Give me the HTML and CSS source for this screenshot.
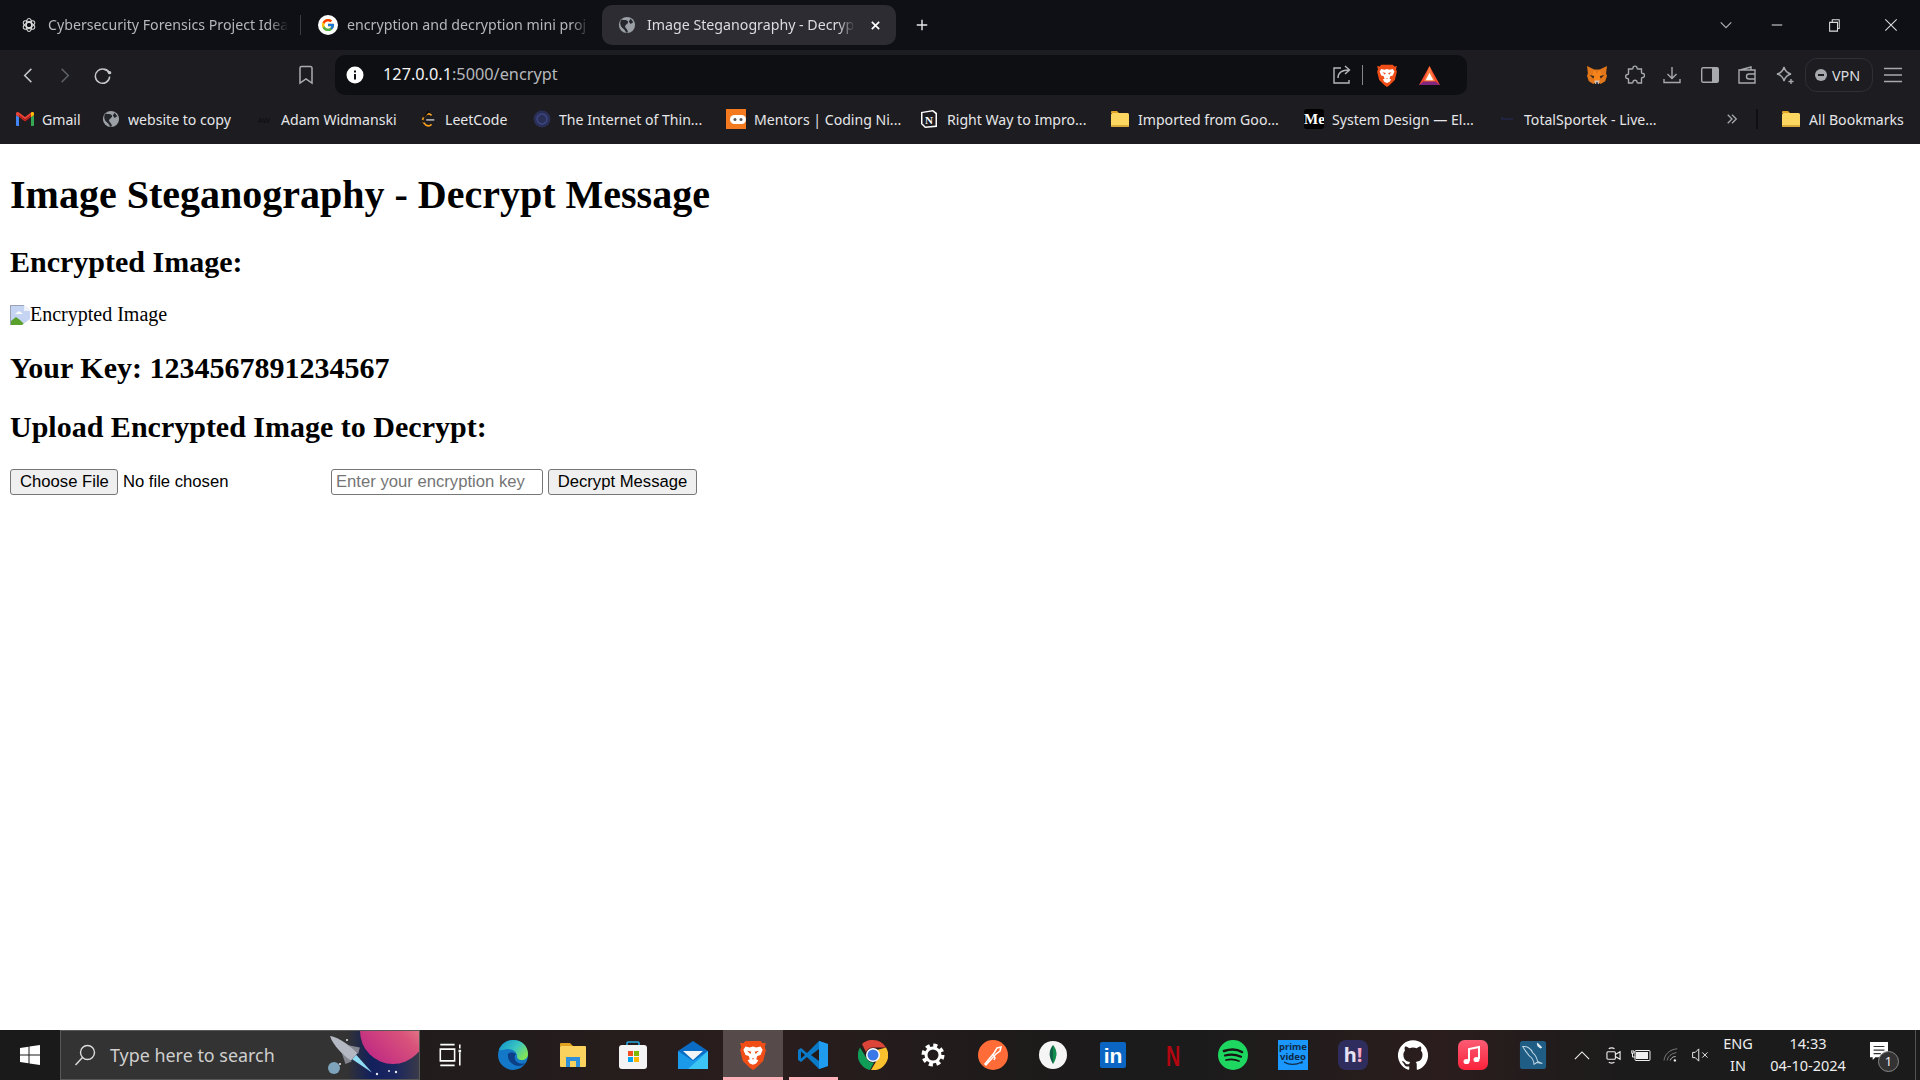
FILE: index.html
```html
<!doctype html>
<html lang="en">
  <head>
    <meta charset="UTF-8" />
    <meta name="viewport" content="width=device-width, initial-scale=1.0" />
    <link rel="stylesheet" href="styles.css">
    <title>Image Steganography - Decrypt Message</title>
  </head>
  <body>
    <svg class="sprite" aria-hidden="true">
      <symbol id="globe" viewBox="0 0 20 20">
        <circle cx="10" cy="10" r="9" fill="#9aa0a6"/>
        <path d="M4 4c3 1 6 0 7 2s-2 3-3 5 3 3 3 7l-2 .5c-1-4-5-5-6-8-1-2-.5-5 1-6.500zM14 3l3 4-3 2-2-3z" fill="#26272c"/>
      </symbol>
      <symbol id="folder" viewBox="0 0 20 20">
        <path d="M1 3a1 1 0 0 1 1-1h5l2 2h-8z" fill="#e0a526"/>
        <rect x="1" y="4" width="18" height="14" rx="1.5" fill="#fbd661"/>
        <rect x="1" y="16" width="18" height="2" rx="1" fill="#d9a93c"/>
      </symbol>
      <symbol id="brave" viewBox="0 0 24 28">
        <path d="M5 1h14l2 2 3-.5-1 4 1 3-2.500 10L15 26l-3 2-3-2-6.500-6.500L0 9.500l1-3-1-4 3 .5z" fill="#f04e16"/>
        <path d="M5 6l4 1 3-1 3 1 4-1 2 3-2 5-3 1-1 3 2 1-2 3-3 1-3-1-2-3 2-1-1-3-3-1-2-5z" fill="#fff"/>
        <path d="M6.500 10l4 1-1 2zM17.500 10l-4 1 1 2zM11 17h2l-1 1.500z" fill="#f04e16"/>
      </symbol>
    </svg>

    <div class="browser">
      <div class="tabstrip">
        <div class="tab">
          <svg class="ico16" viewBox="0 0 20 20" fill="none" stroke="#ddd" stroke-width="1.3"><circle cx="10" cy="10" r="3.500"/><ellipse cx="10" cy="10" rx="8" ry="3.500" transform="rotate(30 10 10)"/><ellipse cx="10" cy="10" rx="8" ry="3.500" transform="rotate(90 10 10)"/><ellipse cx="10" cy="10" rx="8" ry="3.500" transform="rotate(150 10 10)"/></svg>
          <span class="tab-title">Cybersecurity Forensics Project Idea</span>
        </div>
        <div class="tab-sep"></div>
        <div class="tab">
          <svg class="ico20" viewBox="0 0 48 48"><circle cx="24" cy="24" r="24" fill="#fff"/><g transform="translate(6.500 6.500) scale(.73)"><path fill="#FFC107" d="M43.600 20.500H42V20H24v8h11.300C33.700 32.700 29.200 36 24 36c-6.600 0-12-5.400-12-12s5.400-12 12-12c3.100 0 5.800 1.200 7.900 3l5.700-5.700C34 6.100 29.300 4 24 4 13 4 4 13 4 24s9 20 20 20 20-9 20-20c0-1.200-.1-2.300-.4-3.500z"/><path fill="#FF3D00" d="M6.300 14.700l6.600 4.800C14.700 15.100 19 12 24 12c3.100 0 5.800 1.200 7.900 3l5.700-5.700C34 6.100 29.300 4 24 4 16.300 4 9.700 8.300 6.300 14.700z"/><path fill="#4CAF50" d="M24 44c5.200 0 9.900-2 13.400-5.200l-6.200-5.200C29.200 35.100 26.700 36 24 36c-5.200 0-9.600-3.300-11.300-7.900l-6.500 5C9.500 39.600 16.200 44 24 44z"/><path fill="#1976D2" d="M43.600 20.500H42V20H24v8h11.300c-.8 2.200-2.200 4.200-4.100 5.600l6.200 5.200C37 39.200 44 34 44 24c0-1.200-.1-2.300-.4-3.500z"/></g></svg>
          <span class="tab-title">encryption and decryption mini proj</span>
        </div>
        <div class="tab active">
          <svg class="ico18"><use href="#globe"/></svg>
          <span class="tab-title">Image Steganography - Decryp</span>
          <svg class="tab-close" viewBox="0 0 12 12" stroke="#fff" stroke-width="1.800"><path d="M2 2l8 8M10 2l-8 8"/></svg>
        </div>
        <svg class="new-tab" viewBox="0 0 16 16" stroke="#e8e8e8" stroke-width="1.600"><path d="M8 2v12M2 8h12"/></svg>
        <div class="win-controls">
          <svg viewBox="0 0 16 16" fill="none" stroke="#a9abb0" stroke-width="1.500"><path d="M2 5l6 6 6-6"/></svg>
          <svg viewBox="0 0 16 16" fill="none" stroke="#ddd" stroke-width="1.200"><path d="M2 8h12"/></svg>
          <svg viewBox="0 0 16 16" fill="none" stroke="#ddd" stroke-width="1.200"><path d="M3 5h9v10H3zM6 5V2h8v10h-2"/></svg>
          <svg viewBox="0 0 16 16" fill="none" stroke="#ddd" stroke-width="1.200"><path d="M1.500 1.500l13 13M14.500 1.500l-13 13"/></svg>
        </div>
      </div>

      <div class="toolbar">
        <svg class="nav-btn" viewBox="0 0 20 20" fill="none" stroke="#c4c6ca" stroke-width="1.600"><path d="M13 3l-7 7 7 7"/></svg>
        <svg class="nav-btn dim" viewBox="0 0 20 20" fill="none" stroke="#5d5e63" stroke-width="1.600"><path d="M7 3l7 7-7 7"/></svg>
        <svg class="nav-btn" viewBox="0 0 20 20" fill="none" stroke="#c4c6ca" stroke-width="1.600"><path d="M17 8a7.500 7.500 0 1 0 .5 3"/><path d="M12 3.500c2 0 4 1.500 5 3.500" /><circle cx="17.500" cy="7" r="1" fill="#c4c6ca"/></svg>
        <svg class="bookmark-btn" viewBox="0 0 16 20" fill="none" stroke="#aaacb0" stroke-width="1.500"><path d="M2 3a1.500 1.500 0 0 1 1.500-1.500h9A1.500 1.500 0 0 1 14 3v15l-6-4-6 4z"/></svg>
        <div class="omnibox">
          <svg class="ico18" viewBox="0 0 18 18"><circle cx="9" cy="9" r="8.500" fill="#fff"/><rect x="8" y="8" width="2" height="5.500" fill="#0e0f13"/><rect x="8" y="4.500" width="2" height="2" fill="#0e0f13"/></svg>
          <span class="url"><span class="url-host">127.0.0.1</span>:5000/encrypt</span>
          <svg class="omni-share" viewBox="0 0 20 20" fill="none" stroke="#b4b6ba" stroke-width="1.400"><path d="M9 3H2v15h15v-3M6 13c0-5 4-8 11-8M13 1l4.500 4-4.500 4"/></svg>
          <div class="omni-sep"></div>
          <svg class="omni-brave"><use href="#brave"/></svg>
          <svg class="omni-bat" viewBox="0 0 24 22"><path d="M12 1l11 20H1z" fill="#f5472d"/><path d="M1 21l5-4h12l5 4z" fill="#80267f"/><path d="M12 1l6 16H6z" fill="#ff7a3c"/><path d="M12 8l4 8H8z" fill="#fff"/></svg>
        </div>
        <div class="tool-icons">
          <svg viewBox="0 0 22 22"><path d="M0 1l8 4h6l8-4-1 8 1 3-2 6-5 3-1-1h-6l-1 1-5-3-2-6 1-3z" fill="#e2761b"/><path d="M8 5l3 5 3-5 3 8-6 6-6-6z" fill="#f6851b"/><path d="M3 11l5 1-1 3zM19 11l-5 1 1 3z" fill="#3a2a1c"/><path d="M8 17h6l-1 4H9z" fill="#d7c1b3"/><path d="M10 19h2v2h-2z" fill="#233447"/></svg>
          <svg viewBox="0 0 20 20" fill="none" stroke="#a7a9ad" stroke-width="1.400"><path d="M8 3c0-2.500 4-2.500 4 0 0 1 .5 1 1 1h3.500v3.500c0 .5.5 1 1.200 1 2.400 0 2.400 4 0 4-.7 0-1.200.5-1.200 1V18H13c-.5 0-1-.4-1-1 0-2.400-4-2.400-4 0 0 .6-.5 1-1 1H3.500v-3.500c0-.5-.5-1-1-1-2.400 0-2.400-4 0-4 .5 0 1-.5 1-1V4H7c.5 0 1 0 1-1z"/></svg>
          <svg viewBox="0 0 20 20" fill="none" stroke="#a7a9ad" stroke-width="1.400"><path d="M10 2v11M5.500 9l4.500 4.500L14.500 9M2 14v3.500h16V14"/></svg>
          <svg viewBox="0 0 20 20"><rect x="1.700" y="2.700" width="16.600" height="14.600" rx="1.500" fill="none" stroke="#a7a9ad" stroke-width="1.400"/><rect x="12" y="3" width="6" height="14" fill="#a7a9ad"/></svg>
          <svg viewBox="0 0 20 20" fill="none" stroke="#a7a9ad" stroke-width="1.400"><path d="M3 5l11-3v3M2 5h16v13H2zM18 9h-6a2 2 0 0 0 0 5h6"/></svg>
          <svg viewBox="0 0 20 20" fill="none" stroke="#a7a9ad" stroke-width="1.400"><path d="M9 2c1 4 3 6 7 7-4 1-6 3-7 7-1-4-3-6-7-7 4-1 6-3 7-7zM16 14v5M13.500 16.500h5"/></svg>
          <div class="vpn">
            <svg viewBox="0 0 12 12"><circle cx="6" cy="6" r="6" fill="#a7a9ad"/><rect x="3" y="5" width="6" height="2" fill="#1c1c21"/></svg>
            <span>VPN</span>
          </div>
          <svg viewBox="0 0 20 20" stroke="#a7a9ad" stroke-width="1.400"><path d="M1 3.500h18M1 10h18M1 16.500h18"/></svg>
        </div>
      </div>

      <div class="bookmarks">
        <div class="bm">
          <svg class="ico18" viewBox="0 0 18 14"><path d="M0 3l3 2v9H1a1 1 0 0 1-1-1z" fill="#4285f4"/><path d="M15 5l3-2v10a1 1 0 0 1-1 1h-2z" fill="#34a853"/><path d="M0 1.500C0 0 1.700-.5 3 .5L9 5l6-4.500c1.300-1 3-.5 3 1V3l-3 2v-2L9 7.500 3 3v2L0 3z" fill="#ea4335"/><path d="M15 .5c1.300-1 3-.5 3 1V3l-3 2z" fill="#fbbc04"/><path d="M3 3l6 4.500L15 3v2L9 9.500 3 5z" fill="#c5221f"/></svg>
          <span>Gmail</span>
        </div>
        <div class="bm"><svg class="ico18"><use href="#globe"/></svg><span>website to copy</span></div>
        <div class="bm">
          <svg class="ico18" viewBox="0 0 18 18"><text x="9" y="13" class="aw-logo">AW</text></svg>
          <span>Adam Widmanski</span>
        </div>
        <div class="bm">
          <svg class="ico18" viewBox="0 0 18 20" fill="none" stroke-width="1.800"><path d="M4 8l-1 3 1 3 3 3c2 1 4 1 6-1" stroke="#f89f1b"/><path d="M4 8l3-3c2-1 4-1 6 1" stroke="#f89f1b"/><path d="M7 11h9" stroke="#b3b3b3"/><path d="M10 1L4 8M3 11l1 3" stroke="#0c0c0c"/></svg>
          <span>LeetCode</span>
        </div>
        <div class="bm">
          <svg class="ico18" viewBox="0 0 18 18"><circle cx="9" cy="9" r="8.500" fill="#2a2f55"/><circle cx="9" cy="9" r="5" fill="none" stroke="#3d4788" stroke-width="1.500"/></svg>
          <span>The Internet of Thin...</span>
        </div>
        <div class="bm">
          <svg class="ico20" viewBox="0 0 20 20"><rect width="20" height="20" fill="#f47a20"/><rect x="4" y="6" width="16" height="9" rx="4.500" fill="#fff"/><circle cx="9" cy="10.500" r="1.500" fill="#555"/><circle cx="15" cy="10.500" r="1.500" fill="#555"/></svg>
          <span>Mentors | Coding Ni...</span>
        </div>
        <div class="bm">
          <svg class="ico20" viewBox="0 0 20 20"><path d="M2 3l12-2 4 3v14l-12 1-4-4z" fill="#fff"/><path d="M3.500 4l10-1.500 3 2.500v11.500l-10 1-3-3z" fill="#1c1c21"/><text x="10" y="14.500" class="notion-logo">N</text></svg>
          <span>Right Way to Impro...</span>
        </div>
        <div class="bm"><svg class="ico20"><use href="#folder"/></svg><span>Imported from Goo...</span></div>
        <div class="bm">
          <div class="medium-logo">Me</div>
          <span>System Design — El...</span>
        </div>
        <div class="bm">
          <svg class="ico18" viewBox="0 0 18 18" stroke="#232545" stroke-width="1.500"><path d="M3 9h12M3 9l2-2"/></svg>
          <span>TotalSportek - Live...</span>
        </div>
        <svg class="bm-more" viewBox="0 0 14 14" fill="none" stroke="#a7a9ad" stroke-width="1.500"><path d="M2 2l5 5-5 5M7 2l5 5-5 5"/></svg>
        <div class="bm-sep"></div>
        <div class="bm"><svg class="ico20"><use href="#folder"/></svg><span>All Bookmarks</span></div>
      </div>

      <main class="page">
        <h1>Image Steganography - Decrypt Message</h1>
        <h2>Encrypted Image:</h2>
        <div class="broken-img">
          <svg viewBox="0 0 20 20"><path d="M0 0h14l6 6v14H0z" fill="#c5d4f2"/><path d="M14 0l6 6h-6z" fill="#eef1f7"/><path d="M0 0h14v1H1v19H0z" fill="#9aa3b5"/><path d="M5 9l4-3 4 3z" fill="#fff"/><path d="M1 20v-4l5-4 4 3 5 5z" fill="#5aa02c"/><path d="M12 20l8-6v6z" fill="#fff"/></svg>
          <span>Encrypted Image</span>
        </div>
        <h2>Your Key: 1234567891234567</h2>
        <h2>Upload Encrypted Image to Decrypt:</h2>
        <form class="decrypt-form">
          <input type="file" name="image" />
          <input type="text" name="key" placeholder="Enter your encryption key" />
          <button type="button">Decrypt Message</button>
        </form>
      </main>

      <div class="taskbar">
        <div class="start">
          <svg viewBox="0 0 20 20" fill="#fff"><path d="M0 3l8.500-1.300V9.500H0zM9.500 1.500L20 0v9.500H9.500zM0 10.500h8.500v7.800L0 17zM9.500 10.500H20V20L9.500 18.500z"/></svg>
        </div>
        <div class="search">
          <svg class="search-ico" viewBox="0 0 22 22" fill="none" stroke="#ddd" stroke-width="1.400"><circle cx="13.500" cy="8.500" r="7"/><path d="M8.500 13.500L1.500 21"/></svg>
          <span>Type here to search</span>
          <svg class="search-art" viewBox="0 0 96 49">
            <defs>
              <linearGradient id="space" x1="0" y1="0" x2="1" y2="0"><stop offset="0" stop-color="#333"/><stop offset=".25" stop-color="#333"/><stop offset=".5" stop-color="#12205c"/><stop offset=".75" stop-color="#1a2660"/><stop offset="1" stop-color="#3a3a48"/></linearGradient>
              <linearGradient id="planet" x1="0" y1="1" x2="1" y2="0"><stop offset="0" stop-color="#b81f86"/><stop offset=".55" stop-color="#d9537a"/><stop offset="1" stop-color="#f5b89a"/></linearGradient>
            </defs>
            <rect width="96" height="49" fill="url(#space)"/>
            <circle cx="70" cy="0" r="33" fill="url(#planet)"/>
            <circle cx="11" cy="37" r="6" fill="#7da4bb"/>
            <g transform="translate(7 5) rotate(41)">
              <path d="M32 -3L56 0 32 3z" fill="#8fdcf5"/>
              <path d="M20 -5L30 -11 33 -5zM20 5L30 11 33 5z" fill="#83868f"/>
              <path d="M0 0C8 -5 22 -6 32 -5V5C22 6 8 5 0 0z" fill="#b4b8c2"/>
            </g>
            <g fill="#e8e8f0"><circle cx="24" cy="9" r="1"/><circle cx="54" cy="43" r="1.200"/><circle cx="66" cy="40" r="1"/><circle cx="73" cy="41" r="1.200"/><circle cx="17" cy="33" r="1"/></g>
          </svg>
        </div>
        <div class="slot">
          <svg class="ico26" viewBox="0 0 20 20" fill="none" stroke="#fff" stroke-width="1.200"><path d="M1 2h11M1 18h11M1 5.500h11v9H1zM16 2v3M16 8v10"/><rect x="15" y="6" width="2" height="2" fill="#fff" stroke="none"/></svg>
        </div>
        <div class="slot">
          <svg class="ico30" viewBox="0 0 30 30">
            <defs><linearGradient id="edge" x1="0" y1="0" x2="1" y2=".6"><stop offset="0" stop-color="#0d8fd0"/><stop offset=".6" stop-color="#3cc6c0"/><stop offset="1" stop-color="#7fe35a"/></linearGradient></defs>
            <circle cx="15" cy="15" r="15" fill="#1478c8"/>
            <path d="M1 10C3 4 9 0 15 0c9 0 15 6 15 14 0 4-3 6-6 6-4 0-5-2-5-4 0-4-4-7-9-7-4 0-7 2-9 1z" fill="url(#edge)"/>
            <path d="M10 14c-1 6 4 12 11 12 2 0 5-1 6-3-3 1-6 1-8-1-3-2-3-6-1-8-3-2-7-2-8 0z" fill="#0d3f86"/>
          </svg>
        </div>
        <div class="slot">
          <svg class="ico30" viewBox="0 0 30 30"><path d="M2 4a1 1 0 0 1 1-1h9l3 3H2z" fill="#e0a020"/><rect x="2" y="6" width="26" height="21" rx="1" fill="#fbd25e"/><path d="M8 27V17h14v10h-4v-6h-6v6z" fill="#2f8fd8"/></svg>
        </div>
        <div class="slot">
          <svg class="ico30" viewBox="0 0 30 30"><path d="M9 8V3a1 1 0 0 1 1-1h10a1 1 0 0 1 1 1v5" fill="none" stroke="#2aa4e0" stroke-width="1.600"/><rect x="1" y="5" width="28" height="24" rx="3" fill="#f4f4f4"/><rect x="10" y="11" width="5" height="5" fill="#f25022"/><rect x="16" y="11" width="5" height="5" fill="#7fba00"/><rect x="10" y="17" width="5" height="5" fill="#00a4ef"/><rect x="16" y="17" width="5" height="5" fill="#ffb900"/></svg>
        </div>
        <div class="slot">
          <svg class="ico30" viewBox="0 0 30 30"><path d="M0 11L15 1l15 10v18H0z" fill="#0a6cc4"/><path d="M5 11h20L15 20z" fill="#f2f4f6"/><path d="M0 11l15 10 15-10v18H0z" fill="#1a9ae8"/><path d="M30 11v18H10z" fill="#3cc4f5"/></svg>
        </div>
        <div class="slot active">
          <svg class="ico30 brave-big"><use href="#brave"/></svg>
        </div>
        <div class="slot open">
          <svg class="ico30" viewBox="0 0 30 30"><path d="M21 1L9 13 3 8 0 10v10l3 2 6-5 12 12 9-3V4z" fill="#0a7ac8"/><path d="M21 1l9 3v22l-9 3z" fill="#1f9cf0"/><path d="M21 9l-8 6 8 6z" fill="#241a1a"/><path d="M3 11.500L7 15l-4 3.500z" fill="#241a1a"/></svg>
        </div>
        <div class="slot">
          <svg class="ico30" viewBox="0 0 30 30"><path d="M15 0a15 15 0 0 1 13 7.500H15A7.500 7.500 0 0 0 8 12L4 4a15 15 0 0 1 11-4z" fill="#db4437"/><path d="M2 7.500L9 19a7.500 7.500 0 0 0 7 3.500L12 30A15 15 0 0 1 2 7.500z" fill="#0f9d58"/><path d="M28 7.500A15 15 0 0 1 13 30l6-10a7.500 7.500 0 0 0 0-10z" fill="#fbc02d"/><circle cx="15" cy="15" r="7" fill="#fff"/><circle cx="15" cy="15" r="5.500" fill="#3b78e7"/></svg>
        </div>
        <div class="slot">
          <svg class="ico24" viewBox="0 0 24 24" fill="none" stroke="#fff"><circle cx="12" cy="12" r="7" stroke-width="3"/><circle cx="12" cy="12" r="9.500" stroke-width="4" stroke-dasharray="4 3.460"/></svg>
        </div>
        <div class="slot">
          <svg class="ico30" viewBox="0 0 30 30"><circle cx="15" cy="15" r="15" fill="#ff6c37"/><path d="M7 24l9-11 3-5 4-1-1 4-4 3-10 11zM15 14l2 4-1 2" fill="none" stroke="#fff" stroke-width="1.500"/></svg>
        </div>
        <div class="slot">
          <svg class="ico28" viewBox="0 0 28 28"><circle cx="14" cy="14" r="14" fill="#f5f5f5"/><path d="M14 4c4 5 5 11 0 19-5-8-4-14 0-19z" fill="#116149"/><path d="M14 4c4 5 5 11 0 19z" fill="#13aa52" opacity=".6"/></svg>
        </div>
        <div class="slot">
          <svg class="ico26" viewBox="0 0 26 26"><rect width="26" height="26" rx="2" fill="#0a66c2"/><text x="13" y="21" class="in-logo">in</text></svg>
        </div>
        <div class="slot">
          <svg class="ico30" viewBox="0 0 30 30"><text transform="translate(15 26) scale(.68 1)" class="netflix-logo">N</text></svg>
        </div>
        <div class="slot">
          <svg class="ico30" viewBox="0 0 30 30" fill="none" stroke="#191414" stroke-linecap="round"><circle cx="15" cy="15" r="15" fill="#1ed760" stroke="none"/><path d="M6 11c6-2 13-2 18 1" stroke-width="2.600"/><path d="M7 15.500c5-1.500 11-1 16 1.200" stroke-width="2.200"/><path d="M8 20c4-1 9-.8 13 1" stroke-width="1.800"/></svg>
        </div>
        <div class="slot">
          <div class="prime-logo"><span>prime</span><span>video</span><svg viewBox="0 0 24 5" fill="none" stroke="#0f2a46" stroke-width="1.200"><path d="M3 1c5 3 12 3 18 0M21 0v2h-2"/></svg></div>
        </div>
        <div class="slot">
          <div class="hi-logo">h<span>!</span></div>
        </div>
        <div class="slot">
          <svg class="ico30" viewBox="0 0 24 24" fill="#fff"><path d="M12 .3a12 12 0 0 0-3.800 23.400c.6.1.8-.3.8-.6v-2c-3.300.7-4-1.600-4-1.600-.6-1.400-1.400-1.800-1.400-1.800-1-.7.1-.7.1-.7 1.200 0 1.900 1.200 1.900 1.200 1 1.800 2.800 1.300 3.500 1 0-.8.4-1.300.7-1.600-2.700-.3-5.500-1.300-5.500-6 0-1.200.5-2.300 1.300-3.100-.2-.4-.6-1.600 0-3.200 0 0 1-.3 3.400 1.200a11.500 11.500 0 0 1 6 0c2.300-1.500 3.300-1.200 3.300-1.200.6 1.600.2 2.800 0 3.200.9.800 1.300 1.900 1.300 3.200 0 4.600-2.800 5.600-5.500 5.900.5.400.9 1 .9 2.200v3.300c0 .3.1.7.8.6A12 12 0 0 0 12 .3"/></svg>
        </div>
        <div class="slot">
          <svg class="ico30" viewBox="0 0 30 30"><defs><linearGradient id="music" x1="0" y1="0" x2="0" y2="1"><stop offset="0" stop-color="#fb5c74"/><stop offset="1" stop-color="#fa233b"/></linearGradient></defs><rect width="30" height="30" rx="6.500" fill="url(#music)"/><path d="M11 21V9l10-2v12" fill="none" stroke="#fff" stroke-width="2"/><ellipse cx="8.500" cy="21.500" rx="3" ry="2.600" fill="#fff"/><ellipse cx="18.500" cy="19.500" rx="3" ry="2.600" fill="#fff"/></svg>
        </div>
        <div class="slot">
          <svg class="ico28" viewBox="0 0 28 30"><rect width="28" height="30" rx="3" fill="#1f5d85"/><path d="M3 6c4-1 9 2 11 7 3 2 4 5 5 9l5 2-6-1c-1 1-2 2-3 2 0-4-2-7-5-9C8 13 5 10 3 6z" fill="none" stroke="#bcd4e2" stroke-width="1.100"/><path d="M19 2l5 5-2 1-3-2-1-3z" fill="#dfe9ef"/></svg>
        </div>
        <div class="tray">
          <svg class="tray-chevron" viewBox="0 0 18 10" fill="none" stroke="#eee" stroke-width="1.300"><path d="M1 9l8-8 8 8"/></svg>
          <svg class="tray-meet" viewBox="0 0 16 20" fill="none" stroke="#eee" stroke-width="1.200"><rect x="1" y="6" width="9" height="8" rx="1"/><path d="M10 9l5-3v8l-5-3M3 3c1-1.500 5-1.500 6 0M3 17c1 1.500 5 1.500 6 0"/></svg>
          <svg class="tray-battery" viewBox="0 0 20 14"><rect x="4" y="2.500" width="15" height="10" rx="1" fill="none" stroke="#eee"/><rect x="5" y="4" width="12" height="7" fill="#eee"/><path d="M0 3h3v2H0zM1.500 5v4h3" fill="none" stroke="#eee"/></svg>
          <svg class="tray-wifi" viewBox="0 0 20 18" fill="none" stroke="#8a8a8a" stroke-width="1.100"><path d="M1 16C2 8 8 2 18 1M5 16c1-5 5-9 12-10"/><path d="M9 16c1-3 3-5 7-5" stroke="#ccc"/><circle cx="15" cy="16" r="1.500" fill="#eee" stroke="none"/></svg>
          <svg class="tray-vol" viewBox="0 0 20 16" fill="none" stroke="#eee" stroke-width="1.100"><path d="M1 5h3l4-4v14l-4-4H1zM12 5l6 6M18 5l-6 6"/></svg>
          <div class="tray-lang"><span>ENG</span><span>IN</span></div>
          <div class="tray-clock"><span>14:33</span><span>04-10-2024</span></div>
          <div class="tray-notif">
            <svg viewBox="0 0 20 20"><path d="M0 0h20v17H6l-3 3v-3H0z" fill="#fff"/><path d="M4 5h12M4 9h12M4 13h8" stroke="#333" stroke-width="1.300"/></svg>
            <span class="notif-badge">1</span>
          </div>
          <div class="show-desktop"></div>
        </div>
      </div>
    </div>
  </body>
</html>
```

FILE: styles.css
```css
html, body {
  margin: 0;
  height: 100%;
  overflow: hidden;
  background: #fff;
}

.sprite {
  display: none;
}

.browser {
  display: flex;
  flex-direction: column;
  height: 100vh;
}

.ico16 { width: 16px; height: 16px; flex: none; }
.ico18 { width: 18px; height: 18px; flex: none; }
.ico20 { width: 20px; height: 20px; flex: none; }
.ico24 { width: 24px; height: 24px; flex: none; }
.ico26 { width: 26px; height: 26px; flex: none; }
.ico28 { width: 28px; height: 28px; flex: none; }
.ico30 { width: 30px; height: 30px; flex: none; }

/* tab strip */
.tabstrip {
  display: grid;
  grid-template-columns: 300px 1px 301px 294px 52px 1fr;
  height: 50px;
  flex: none;
  align-items: center;
  background: #0f1015;
  font: 14.2px "Noto Sans", sans-serif;
  color: #b6b7bb;
}

.tab {
  display: flex;
  align-items: center;
  gap: 11px;
  height: 40px;
  padding-left: 21px;
  min-width: 0;
}

.tab:nth-child(3) {
  gap: 9px;
  padding-left: 17px;
}

.tab.active {
  gap: 11px;
  padding-left: 16px;
  border-radius: 10px;
  background: #2c2c32;
  color: #dcdcdf;
}

.tab-title {
  flex: 1;
  margin-right: 12px;
  padding-bottom: 2px;
  overflow: hidden;
  white-space: nowrap;
  -webkit-mask-image: linear-gradient(to right, #000 92%, transparent);
  mask-image: linear-gradient(to right, #000 92%, transparent);
}

.tab.active .tab-title {
  margin-right: 4px;
}

.tab-close {
  width: 11px;
  height: 11px;
  margin-right: 15px;
  flex: none;
}

.tab-sep {
  height: 20px;
  background: #3a3a40;
}

.new-tab {
  width: 14px;
  height: 14px;
  margin-left: 19px;
}

.win-controls {
  display: grid;
  grid-template-columns: 51px 57px 57px 1fr;
  justify-self: end;
  width: 201px;
  align-items: center;
  padding-right: 30px;
  box-sizing: border-box;
}

.win-controls svg {
  width: 14px;
  height: 14px;
}

/* toolbar */
.toolbar {
  display: flex;
  align-items: center;
  height: 50px;
  flex: none;
  background: #1c1c21;
}

.nav-btn {
  width: 19px;
  height: 19px;
  margin-left: 19px;
  flex: none;
}

.nav-btn.dim {
  margin-left: 17px;
}

.bookmark-btn {
  width: 16px;
  height: 20px;
  margin-left: 186px;
  flex: none;
}

.omnibox {
  display: flex;
  align-items: center;
  width: 1132px;
  height: 40px;
  margin-left: 21px;
  padding-left: 11px;
  box-sizing: border-box;
  border-radius: 10px;
  background: #0e0f13;
  flex: none;
}

.url {
  margin-left: 19px;
  padding-bottom: 2px;
  flex: 1;
  font: 16.3px "Noto Sans", sans-serif;
  color: #b7b8bc;
}

.url-host {
  color: #f4f4f5;
}

.omni-share {
  width: 20px;
  height: 20px;
  margin-left: 2px;
  flex: none;
}

.omni-sep {
  width: 1px;
  height: 20px;
  margin-left: 10px;
  background: #85868a;
}

.omni-brave {
  width: 20px;
  height: 23px;
  margin-left: 14px;
  flex: none;
}

.omni-bat {
  width: 23px;
  height: 21px;
  margin-left: 21px;
  margin-right: 26px;
  flex: none;
}

.tool-icons {
  display: grid;
  grid-template-columns: repeat(5, 37.6px) 30px 78px 24px;
  margin-left: 120px;
  align-items: center;
  justify-items: start;
}

.tool-icons > svg {
  width: 20px;
  height: 20px;
}

.vpn {
  display: flex;
  align-items: center;
  gap: 5px;
  width: 68px;
  height: 34px;
  padding-left: 9px;
  box-sizing: border-box;
  border: 1px solid #2f3036;
  border-radius: 12px;
  font: 14.4px "Noto Sans", sans-serif;
  color: #dcdcdf;
}

.vpn svg {
  width: 12px;
  height: 12px;
}

/* bookmarks bar */
.bookmarks {
  display: grid;
  grid-template-columns: 86px 153px 164px 114px 193px 193px 191px 194px 194px 224px 34px 25px 1fr;
  height: 44px;
  padding: 0 0 6px 16px;
  box-sizing: border-box;
  flex: none;
  align-items: center;
  background: #1c1c21;
  font: 14.1px "Noto Sans", sans-serif;
  color: #e6e6e8;
}

.bm {
  display: flex;
  align-items: center;
  gap: 8px;
  white-space: nowrap;
}

.aw-logo {
  font: 8px "Liberation Sans", sans-serif;
  text-anchor: middle;
  fill: #0c0c0c;
}

.notion-logo {
  font: bold 11px "Liberation Serif", serif;
  text-anchor: middle;
  fill: #fff;
}

.medium-logo {
  width: 20px;
  height: 20px;
  overflow: hidden;
  border-radius: 3px;
  background: #000;
  font: bold 15px/20px "Liberation Serif", serif;
  color: #fff;
  flex: none;
}

.bm-more {
  width: 12px;
  height: 12px;
  margin-left: 4px;
}

.bm-sep {
  width: 2px;
  height: 20px;
  background: #101014;
}

/* page */
.page {
  flex: 1;
  min-height: 0;
  padding: 0 10px;
  background: #fff;
  color: #000;
  font: 20px "Liberation Serif", "Times New Roman", serif;
}

.page h1 {
  margin: 26.8px 0;
  font-size: 40px;
}

.page h2 {
  margin: 24.9px 0;
  font-size: 30px;
}

.broken-img {
  display: flex;
  height: 23px;
  align-items: center;
}

.broken-img svg {
  width: 20px;
  height: 20px;
  flex: none;
}

.decrypt-form {
  display: flex;
  align-items: center;
}

.decrypt-form input,
.decrypt-form button {
  margin: 0;
  font: 16.67px "Liberation Sans", Arial, sans-serif;
  color: #000;
  box-sizing: border-box;
  height: 26px;
}

.decrypt-form input[type="file"] {
  width: 321px;
  padding: 0;
}

.decrypt-form input[type="file"]::file-selector-button {
  height: 26px;
  margin-right: 5px;
  padding: 0 8px 0 9px;
  border: 1px solid #767676;
  border-radius: 3px;
  background: #efefef;
  font: inherit;
}

.decrypt-form input[type="text"] {
  width: 212px;
  padding: 0 4px;
  border: 1px solid #767676;
  border-radius: 3px;
}

.decrypt-form input::placeholder {
  color: #757575;
}

.decrypt-form button {
  width: 149px;
  margin-left: 5px;
  padding: 0;
  border: 1px solid #767676;
  border-radius: 3px;
  background: #efefef;
}

/* taskbar */
.taskbar {
  display: grid;
  grid-template-columns: 60px 360px 63px repeat(18, 60px) 1fr;
  height: 50px;
  flex: none;
  background: linear-gradient(to right, #1a1a1a 0%, #221c1c 25%, #2a1d1d 40%, #1c1a1a 55%, #1b1b1b 62%, #2b1d1d 75%, #1b1b1b 85%);
  color: #eee;
  font-family: "Noto Sans", sans-serif;
}

.start,
.slot {
  position: relative;
  display: flex;
  align-items: center;
  justify-content: center;
}

.start svg {
  width: 20px;
  height: 20px;
}

.search {
  display: flex;
  align-items: center;
  box-sizing: border-box;
  border: 1px solid #585858;
  background: #333;
  overflow: hidden;
  font-size: 17.9px;
  color: #cfcfcf;
}

.search-ico {
  width: 22px;
  height: 22px;
  margin-left: 13px;
  flex: none;
}

.search > span {
  margin-left: 14px;
  flex: 1;
  white-space: nowrap;
}

.search-art {
  width: 96px;
  height: 49px;
  flex: none;
}

.slot.active {
  background: #564a4a;
  box-shadow: inset 0 -3px 0 #ffb0b8;
}

.slot.open::after {
  content: "";
  position: absolute;
  left: 6px;
  right: 5px;
  bottom: 0;
  height: 3px;
  background: #ffb0b8;
}

.brave-big {
  width: 26px;
  height: 30px;
}

.in-logo {
  font: bold 21px "Liberation Sans", sans-serif;
  text-anchor: middle;
  fill: #fff;
}

.netflix-logo {
  font: bold 29px "Liberation Sans", sans-serif;
  text-anchor: middle;
  fill: #b20710;
}

.prime-logo {
  display: flex;
  flex-direction: column;
  align-items: center;
  width: 30px;
  height: 30px;
  padding-top: 2px;
  box-sizing: border-box;
  background: #1a98ff;
  font: bold 9.5px/9.500px "Noto Sans", sans-serif;
  color: #0f2a46;
}

.prime-logo svg {
  width: 24px;
  height: 5px;
}

.hi-logo {
  width: 30px;
  height: 30px;
  border-radius: 8px;
  background: #2f2d5e;
  text-align: center;
  font: bold 20px/30px "Noto Sans", sans-serif;
  color: #e6e2f2;
}

.hi-logo span {
  color: #f7a8c4;
}

.tray {
  display: grid;
  grid-template-columns: 38px 24px 31px 30px 28px 48px 92px 1fr;
  align-items: center;
  justify-items: center;
  font-size: 15px;
}

.tray-chevron { width: 16px; height: 9px; }
.tray-meet { width: 15px; height: 19px; }
.tray-battery { width: 20px; height: 14px; }
.tray-wifi { width: 16px; height: 14px; }
.tray-vol { width: 19px; height: 14px; }

.tray-lang,
.tray-clock {
  display: flex;
  flex-direction: column;
  align-items: center;
  gap: 3px;
  padding-bottom: 2px;
  font-size: 14.5px;
  line-height: 19px;
  white-space: nowrap;
}

.tray-notif {
  position: relative;
  justify-self: start;
  width: 20px;
  height: 18px;
  margin-left: 15px;
  margin-bottom: 9px;
}

.tray-notif svg {
  display: block;
  width: 20px;
  height: 18px;
}

.notif-badge {
  position: absolute;
  left: 9px;
  top: 9px;
  width: 19px;
  height: 19px;
  border: 1px solid #888;
  border-radius: 50%;
  background: #333;
  text-align: center;
  font-size: 13px;
  line-height: 19px;
}

.show-desktop {
  position: absolute;
  right: 4px;
  bottom: 0;
  width: 1px;
  height: 50px;
  background: #555;
}
```
